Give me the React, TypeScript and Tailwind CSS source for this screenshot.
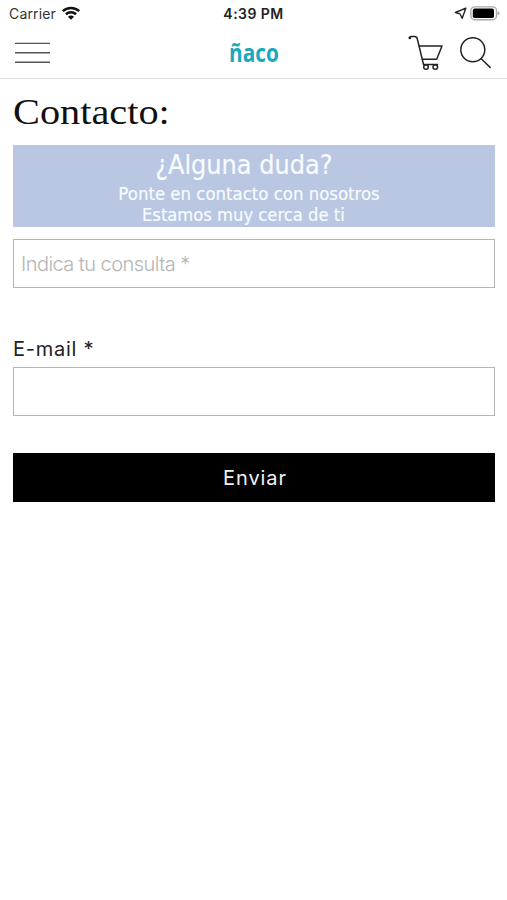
import React from "react";

function StatusBar() {
  return (
    <div className="flex h-[27px] items-center justify-between pl-[9px] pr-[7px] font-['Inter','Liberation_Sans',sans-serif]">
      <div className="flex w-[120px] items-center gap-[5px]">
        <span className="text-[14px] leading-[27px] tracking-[0.15px] text-[#333]">Carrier</span>
        <svg width="20" height="15" viewBox="0 0 20 15" fill="none" stroke="#111" strokeWidth="2.5">
          <path d="M1.8 5.2C6.3 .9 13.7 .9 18.2 5.2" />
          <path d="M4.9 8.3C7.8 5.7 12.2 5.7 15.1 8.3" />
          <path d="M10 13.8 6.9 10.8Q10 8.4 13.1 10.8Z" fill="#111" stroke="none" />
        </svg>
      </div>
      <span className="-ml-[2px] text-[14px] font-semibold leading-[27px] tracking-[0.45px] text-[#222]">4:39 PM</span>
      <div className="flex w-[120px] items-center justify-end gap-[3px]">
        <svg width="13" height="13" viewBox="0 0 13 13" fill="none" stroke="#222" strokeWidth="1.4" strokeLinejoin="round">
          <path d="M11.8 1.2 1.4 5.5 5.9 6.8 8.2 11.3Z" />
        </svg>
        <svg width="30" height="15" viewBox="0 0 30 15">
          <rect x=".9" y=".9" width="25.6" height="12.8" rx="3.8" fill="white" stroke="#aaa" strokeWidth="1.4" />
          <rect x="2.8" y="2.6" width="21.2" height="9.4" rx="1.8" fill="#000" />
          <path d="M27.7 5q1.9 .7 1.9 2.3t-1.9 2.3Z" fill="#aaa" />
        </svg>
      </div>
    </div>
  );
}

function Header() {
  return (
    <header className="flex h-[52px] items-start justify-between border-b-[1.5px] border-[#dfdfdf] px-[15px]">
      <button aria-label="Menú" className="flex w-[83px] flex-col pt-[15px]">
        <svg width="35" height="22" viewBox="0 0 35 22" stroke="#555" strokeWidth="1.4">
          <path d="M0 1.4h35M0 10.8h35M0 20.2h35" />
        </svg>
      </button>
      <div className="flex w-[80px] justify-center pt-[8px]">
        <span className="scale-x-[0.83] font-['Open_Sans','Noto_Sans',sans-serif] text-[25px] font-bold leading-[34px] text-[#19a9bb]">ñaco</span>
      </div>
      <div className="-ml-[1px] mr-[1px] flex w-[83px] gap-[16px] pt-[7px]">
        <svg width="36" height="37" viewBox="0 0 36 37" fill="none" stroke="#222" strokeWidth="1.5" strokeLinejoin="round" strokeLinecap="round">
          <path d="M1.6 3.6Q2.3 2.6 3.5 2.6H6.5Q8.8 2.6 9.3 4.8L15.5 30.5H29.5" />
          <path d="M11.2 12H34L28.7 25.3H14.3" />
          <circle cx="18" cy="33" r="2.3" />
          <circle cx="27.3" cy="33" r="2.3" />
          <circle cx="1.8" cy="3.9" r=".6" />
        </svg>
        <svg width="31" height="37" viewBox="0 0 31 37" fill="none" stroke="#222" strokeWidth="1.5">
          <circle cx="12.8" cy="15.7" r="12" />
          <path d="m20.8 24.2 9.8 9.8" />
        </svg>
      </div>
    </header>
  );
}

function Banner() {
  return (
    <section className="flex h-[82px] flex-col items-center bg-[#b9c7e2] pr-[21px] pt-[4px] font-['DejaVu_Sans','Noto_Sans',sans-serif] text-[#f8fbff]">
      <p className="scale-x-[0.925] whitespace-nowrap text-[26px] leading-[33px] [-webkit-text-stroke:0.2px_#f8fbff]">¿Alguna duda?</p>
      <p className="mt-[1px] pl-[12px]"><span className="inline-block scale-x-[0.92] whitespace-nowrap text-[18px] leading-[22px] [-webkit-text-stroke:0.2px_#f8fbff]">Ponte en contacto con nosotros</span></p>
      <p className="-mt-[3px]"><span className="inline-block scale-x-[0.91] whitespace-nowrap text-[18px] leading-[22px] [-webkit-text-stroke:0.2px_#f8fbff]">Estamos muy cerca de ti</span></p>
    </section>
  );
}

export default function App() {
  return (
    <div className="h-[900px] w-full bg-white">
      <StatusBar />
      <Header />
      <main className="pl-[13px] pr-[12px]">
        <h1 className="h-[66px] pt-[12px] font-['Liberation_Serif',serif] text-[36px] leading-[42px] text-[#111]">
          <span className="inline-block origin-left scale-x-[1.12]">Contacto:</span>
        </h1>
        <Banner />
        <input
          placeholder="Indica tu consulta *"
          className="mt-[12px] block h-[49px] w-full border-[1.5px] border-[#b5b5b5] px-[7px] font-['Inter','Liberation_Sans',sans-serif] text-[20px] font-light tracking-[-0.55px] outline-none placeholder:text-[#b5b5b5]"
        />
        <label htmlFor="email" className="mt-[47px] block h-[32px] font-['Inter','Liberation_Sans',sans-serif] text-[20px] leading-[28px] tracking-[0.75px] text-[#222]">E-mail *</label>
        <input id="email" className="block h-[49px] w-full border-[1.5px] border-[#b5b5b5] px-[8px] outline-none" />
        <button className="mt-[37px] block h-[49px] w-full bg-black pl-[2px] text-center font-['Inter','Liberation_Sans',sans-serif] text-[20px] tracking-[0.9px] text-[#f2f2f2]">Enviar</button>
      </main>
    </div>
  );
}
